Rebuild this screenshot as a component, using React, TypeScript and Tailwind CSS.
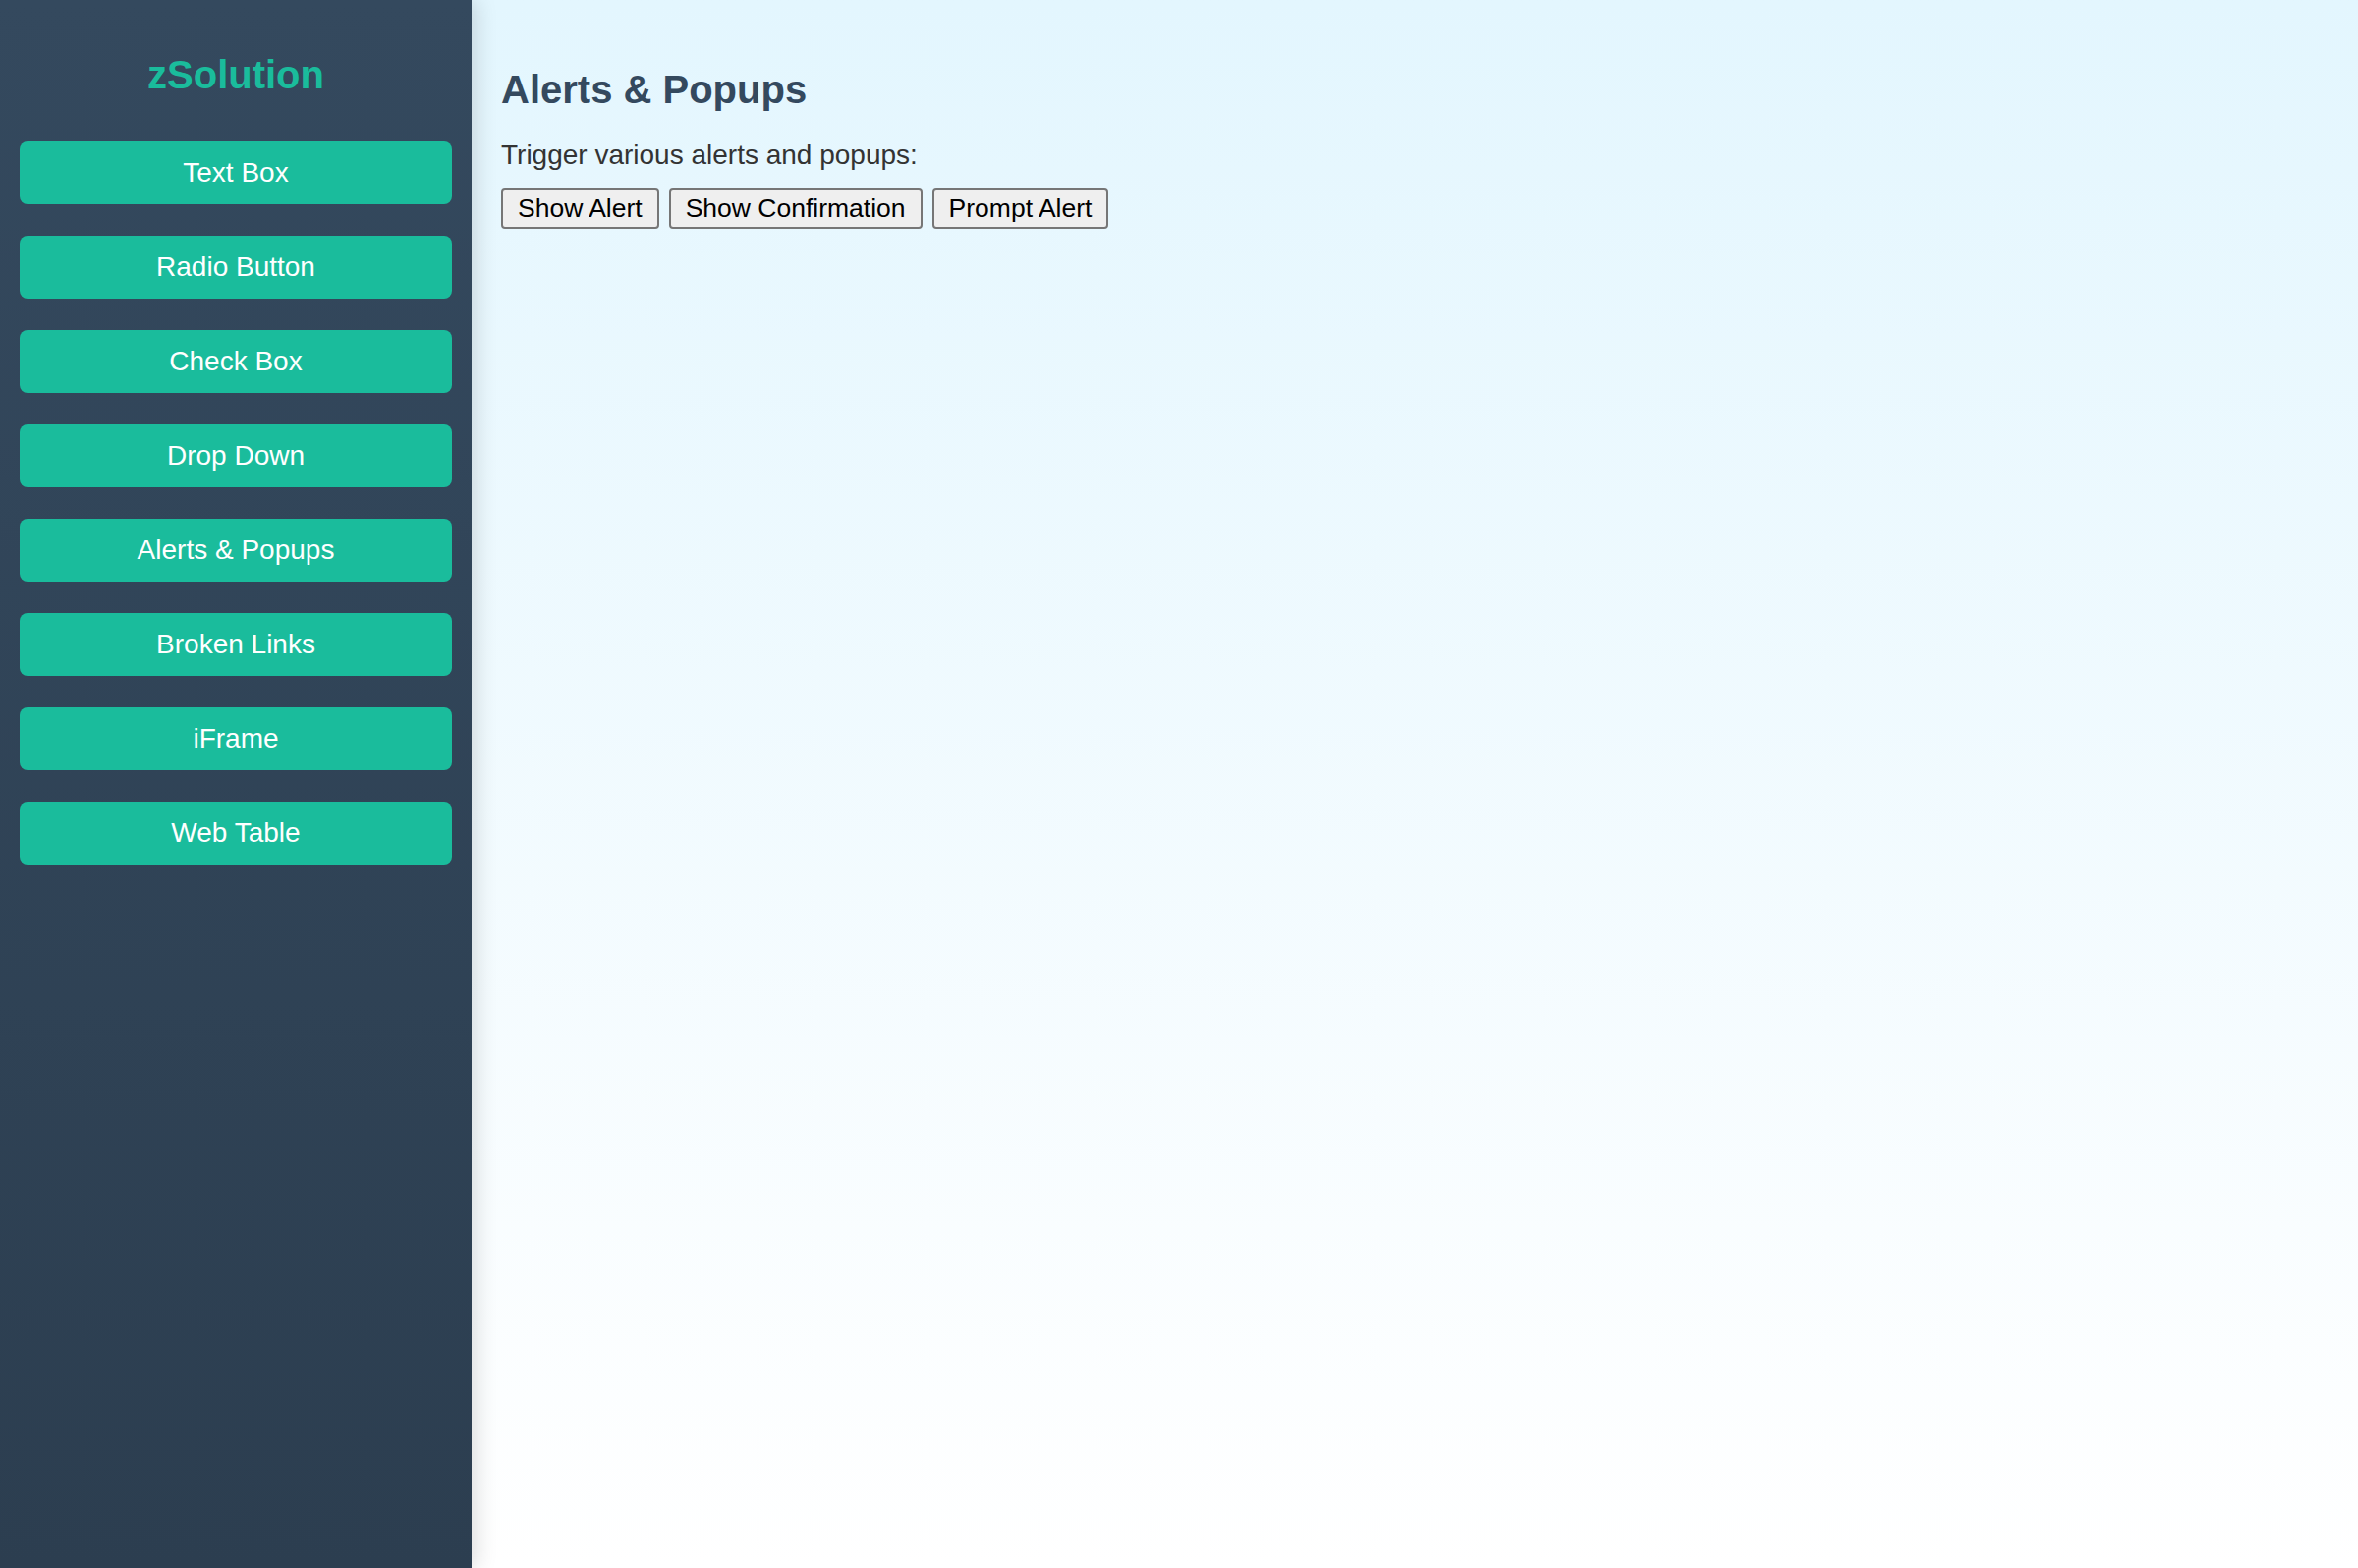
const navItems = [
  'Text Box',
  'Radio Button',
  'Check Box',
  'Drop Down',
  'Alerts & Popups',
  'Broken Links',
  'iFrame',
  'Web Table',
];

const Sidebar = () => (
  <aside className="relative z-10 w-[480px] shrink-0 h-full bg-gradient-to-b from-[#34495e] to-[#2c3e50] px-5 pt-[53px] shadow-[6px_0_20px_rgba(0,0,0,0.12)]">
    <h1 className="text-center text-[40px] leading-[46px] font-bold text-[#1abc9c] mb-[45px]">zSolution</h1>
    <nav className="flex flex-col gap-8">
      {navItems.map((item) => (
        <button
          key={item}
          className="h-16 w-full rounded-lg bg-[#1abc9c] text-white text-[28px] leading-none"
        >
          {item}
        </button>
      ))}
    </nav>
  </aside>
);

export default function App() {
  return (
    <div className="flex h-screen w-full overflow-hidden font-['Liberation_Sans',Arial,sans-serif]">
      <Sidebar />
      <main className="flex-1 h-full bg-gradient-to-b from-[#e3f6fe] to-white px-[30px] pt-[68px]">
        <h2 className="text-[40px] leading-[46px] font-bold text-[#34495e]">Alerts &amp; Popups</h2>
        <p className="mt-[28px] text-[28px] leading-[32px] text-[#333]">Trigger various alerts and popups:</p>
        <div className="mt-[17px] flex gap-[10px]">
          {['Show Alert', 'Show Confirmation', 'Prompt Alert'].map((label) => (
            <button
              key={label}
              className="h-[42px] px-[15px] rounded-[4px] border-2 border-[#767676] bg-[#efefef] text-[26.5px] leading-none text-black"
            >
              {label}
            </button>
          ))}
        </div>
      </main>
    </div>
  );
}
